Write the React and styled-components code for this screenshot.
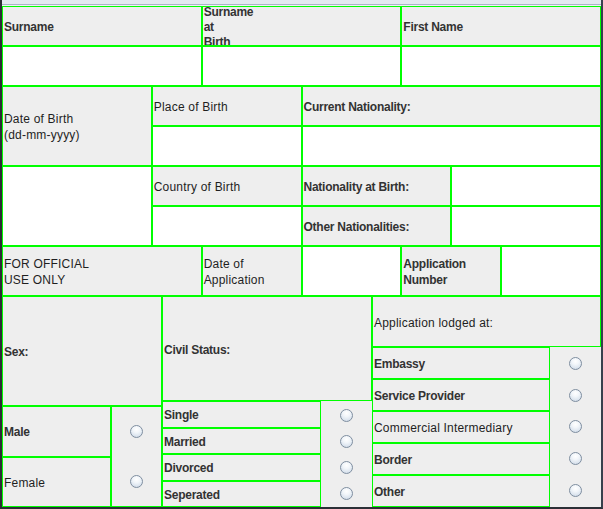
import React from "react";
import styled, { createGlobalStyle, css } from "styled-components";

const GlobalStyle = createGlobalStyle`
    html, body {
        margin: 0;
        padding: 0;
        background: #2e3238;
    }
    * {
        box-sizing: border-box;
    }
`;

export default function App() {
    return (
        <>
            <GlobalStyle />
            <Window>
                <TopStrip />
                <Form>
                    <TopGrid>
                        <Cell $col="1 / 5" $row="1" $bold>Surname</Cell>
                        <Cell $col="5 / 9" $row="1" $bold $lh="15px">
                            <span>
                                Surname
                                <br />
                                at
                                <br />
                                Birth
                            </span>
                        </Cell>
                        <Cell $col="9 / 13" $row="1" $bold>First Name</Cell>
                        <Cell $col="1 / 5" $row="2" $white />
                        <Cell $col="5 / 9" $row="2" $white />
                        <Cell $col="9 / 13" $row="2" $white />

                        <Cell $col="1 / 4" $row="3 / 5">
                            <span>
                                Date of Birth
                                <br />
                                (dd-mm-yyyy)
                            </span>
                        </Cell>
                        <Cell $col="4 / 7" $row="3">Place of Birth</Cell>
                        <Cell $col="7 / 13" $row="3" $bold>Current Nationality:</Cell>
                        <Cell $col="4 / 7" $row="4" $white />
                        <Cell $col="7 / 13" $row="4" $white />

                        <Cell $col="1 / 4" $row="5 / 7" $white />
                        <Cell $col="4 / 7" $row="5">Country of Birth</Cell>
                        <Cell $col="7 / 10" $row="5" $bold>Nationality at Birth:</Cell>
                        <Cell $col="10 / 13" $row="5" $white />
                        <Cell $col="4 / 7" $row="6" $white />
                        <Cell $col="7 / 10" $row="6" $bold>Other Nationalities:</Cell>
                        <Cell $col="10 / 13" $row="6" $white />

                        <Cell $col="1 / 5" $row="7">
                            <span>
                                FOR OFFICIAL
                                <br />
                                USE ONLY
                            </span>
                        </Cell>
                        <Cell $col="5 / 7" $row="7">
                            <span>
                                Date of
                                <br />
                                Application
                            </span>
                        </Cell>
                        <Cell $col="7 / 9" $row="7" $white />
                        <Cell $col="9 / 11" $row="7" $bold>
                            <span>
                                Application
                                <br />
                                Number
                            </span>
                        </Cell>
                        <Cell $col="11 / 13" $row="7" $white />
                    </TopGrid>

                    <Bottom>
                        <Group $w="160px">
                            <Header $h="110px" $bold>Sex:</Header>
                            <Options>
                                <Labels $w="109px">
                                    <Option $bold>Male</Option>
                                    <Option>Female</Option>
                                </Labels>
                                <Radios $framed>
                                    <RadioSlot><Radio /></RadioSlot>
                                    <RadioSlot><Radio /></RadioSlot>
                                </Radios>
                            </Options>
                        </Group>

                        <Group $w="210px">
                            <Header $h="105px" $bold>Civil Status:</Header>
                            <Options>
                                <Labels $w="159px">
                                    <Option $bold>Single</Option>
                                    <Option $bold>Married</Option>
                                    <Option $bold>Divorced</Option>
                                    <Option $bold>Seperated</Option>
                                </Labels>
                                <Radios>
                                    <RadioSlot><Radio /></RadioSlot>
                                    <RadioSlot><Radio /></RadioSlot>
                                    <RadioSlot><Radio /></RadioSlot>
                                    <RadioSlot><Radio /></RadioSlot>
                                </Radios>
                            </Options>
                        </Group>

                        <Group $w="229px">
                            <Header $h="51px">Application lodged at:</Header>
                            <Options>
                                <Labels $w="178px">
                                    <Option $bold>Embassy</Option>
                                    <Option $bold>Service Provider</Option>
                                    <Option>Commercial Intermediary</Option>
                                    <Option $bold>Border</Option>
                                    <Option $bold>Other</Option>
                                </Labels>
                                <Radios>
                                    <RadioSlot><Radio /></RadioSlot>
                                    <RadioSlot><Radio /></RadioSlot>
                                    <RadioSlot><Radio /></RadioSlot>
                                    <RadioSlot><Radio /></RadioSlot>
                                    <RadioSlot><Radio /></RadioSlot>
                                </Radios>
                            </Options>
                        </Group>
                    </Bottom>
                </Form>
            </Window>
        </>
    );
}

// shared look of a green-ruled label box
const labelBox = css`
    display: flex;
    align-items: center;
    padding: 2px 0 0 1px;
    border: 1px solid #00ff00;
    font-weight: ${(p) => (p.$bold ? 700 : 400)};
    letter-spacing: ${(p) => (p.$bold ? "-0.25px" : "0.2px")};
    color: ${(p) => (p.$bold ? "#333333" : "#1f1f1f")};
`;

const Window = styled.div`
    width: 603px;
    height: 509px;
    display: flex;
    flex-direction: column;
    background: #eeeeee;
    border-left: 2px solid #2a2d32;
    border-right: 2px solid #38404c;
    border-bottom: 2px solid #2b2f36;
`;
const TopStrip = styled.div`
    height: 6px;
    flex: none;
    background: linear-gradient(
        #e3e9f0 0,
        #e3e9f0 4px,
        #a8b5c6 4px,
        #a8b5c6 5px,
        #eef1f5 5px
    );
`;
const Form = styled.div`
    flex: 1;
    display: flex;
    flex-direction: column;
    font-family: "Liberation Sans", Arial, sans-serif;
    font-size: 12px;
    color: #333333;
`;
const TopGrid = styled.div`
    display: grid;
    grid-template-columns: repeat(12, 1fr);
    grid-template-rows: repeat(6, 40px) 50px;
`;
const Cell = styled.div`
    ${labelBox}
    grid-column: ${(p) => p.$col};
    grid-row: ${(p) => p.$row};
    overflow: hidden;
    background: ${(p) => (p.$white ? "#ffffff" : "#eeeeee")};
    line-height: ${(p) => p.$lh || "16px"};
    white-space: nowrap;
`;
const Bottom = styled.div`
    flex: 1;
    display: flex;
`;
const Group = styled.div`
    width: ${(p) => p.$w};
    flex: none;
    display: flex;
    flex-direction: column;
`;
const Header = styled.div`
    ${labelBox}
    height: ${(p) => p.$h};
    flex: none;
`;
const Options = styled.div`
    flex: 1;
    display: flex;
`;
const Labels = styled.div`
    width: ${(p) => p.$w};
    flex: none;
    display: flex;
    flex-direction: column;
`;
const Option = styled.div`
    ${labelBox}
    flex: 1;
`;
const Radios = styled.div`
    flex: 1;
    display: flex;
    flex-direction: column;
    border: 1px solid ${(p) => (p.$framed ? "#00ff00" : "transparent")};
`;
const RadioSlot = styled.div`
    flex: 1;
    display: flex;
    align-items: center;
    justify-content: center;
`;
const Radio = styled.span`
    width: 13px;
    height: 13px;
    border-radius: 50%;
    border: 1px solid #7f8ea0;
    background: radial-gradient(
        circle at 50% 30%,
        #ffffff 0,
        #f2f6fa 35%,
        #c9d6e5 100%
    );
`;
